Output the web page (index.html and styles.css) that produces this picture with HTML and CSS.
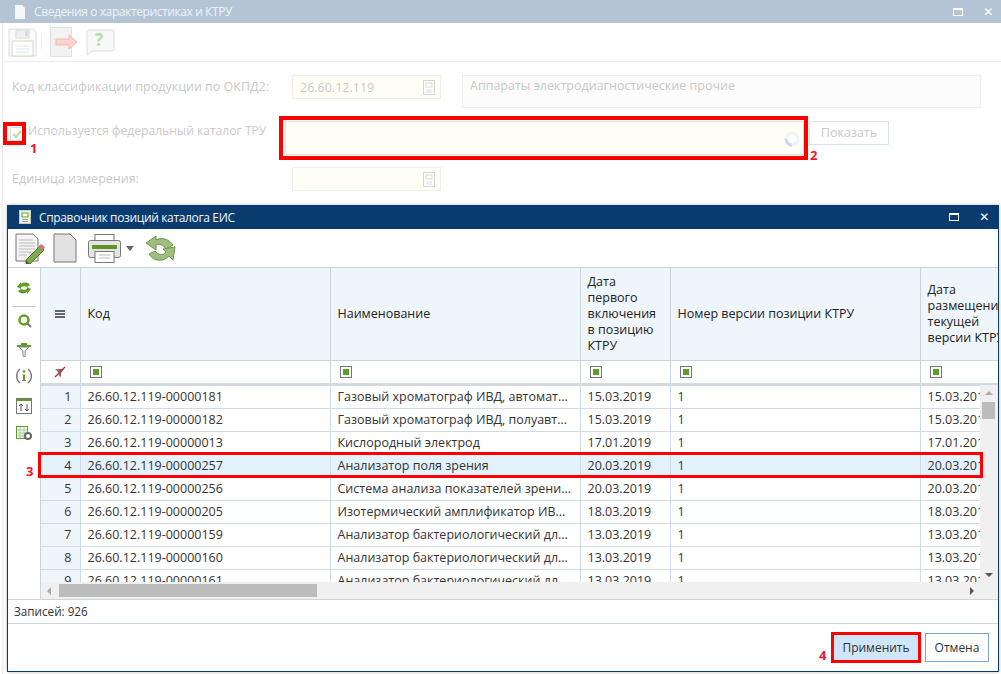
FILE: index.html
```html
<!DOCTYPE html>
<html lang="ru">
<head>
  <meta charset="UTF-8">
  <title>Справочник позиций каталога ЕИС</title>
  <link rel="stylesheet" href="styles.css">
</head>
<body>
  <div class="desk">
    <!-- окно за справочником -->
    <div class="back">
      <div class="back-title">
        <svg class="back-title-icon" width="12" height="14" viewBox="0 0 12 14"><path d="M1 0h7l3 3v11H1z" fill="#f4f6f8"/></svg>
        <span>Сведения о характеристиках и КТРУ</span>
        <span class="win-btns win-btns-back"><i class="win-max"></i><i class="win-close">✕</i></span>
      </div>
      <div class="back-tools">
        <svg width="29" height="29" viewBox="0 0 29 29"><path d="M1 1h24l3 3v24H1z" fill="#fafafa" stroke="#dcdcdc"/><rect x="8" y="2" width="13" height="8" fill="#f0f0f0" stroke="#dcdcdc"/><rect x="17" y="3" width="3" height="5" fill="#d8d8d8"/><rect x="4" y="13" width="21" height="15" fill="#fff" stroke="#c9e0b8"/><path d="M8 18h13M8 21h13M8 24h13" stroke="#e4e4e4"/></svg>
        <span class="back-sep"></span>
        <svg width="28" height="31" viewBox="0 0 28 31"><rect x=".5" y=".5" width="21" height="29" fill="#f2f2f2" stroke="#e2e2e2"/><path d="M6 12h13V8l8 7-8 7v-4H6z" fill="#fbd4d0" stroke="#f2b8b2"/></svg>
        <svg width="30" height="27" viewBox="0 0 30 27"><path d="M3 1h24a2 2 0 0 1 2 2v17a2 2 0 0 1-2 2H8l-6 4V3a2 2 0 0 1 1-2z" fill="#f8f8f8" stroke="#dedede"/><text x="10" y="17" class="q-mark">?</text></svg>
      </div>
      <div class="form">
        <div class="form-row">
          <label class="form-label">Код классификации продукции по ОКПД2:</label>
          <div class="lookup"><span>26.60.12.119</span><svg class="lookup-icon" width="13" height="15" viewBox="0 0 13 15"><rect x="1.500" y=".5" width="11" height="14" fill="#fff" stroke="#d4d4d4"/><rect x="4" y="3" width="6" height="4" fill="none" stroke="#cfe3bf"/><path d="M4 10h6M4 12h6" stroke="#dcdcdc"/></svg></div>
          <div class="name-box">Аппараты электродиагностические прочие</div>
        </div>
        <div class="form-row form-row-check">
          <span class="check"><svg width="12" height="12" viewBox="0 0 12 12"><path d="M2 6l3 3 5-6" fill="none" stroke="#b9dca6" stroke-width="2"/></svg></span>
          <label class="form-label check-label">Используется федеральный каталог ТРУ</label>
          <div class="combo"><svg class="spinner" width="16" height="16" viewBox="0 0 16 16"><circle cx="8" cy="8" r="6" fill="none" stroke="#f0f2f4" stroke-width="3"/><path d="M2 8a6 6 0 0 0 6 6" fill="none" stroke="#c5d9ee" stroke-width="3"/></svg></div>
          <div class="show-btn">Показать</div>
        </div>
        <div class="form-row">
          <label class="form-label">Единица измерения:</label>
          <div class="lookup"><span></span><svg class="lookup-icon" width="13" height="15" viewBox="0 0 13 15"><rect x="1.500" y=".5" width="11" height="14" fill="#fff" stroke="#d4d4d4"/><rect x="4" y="3" width="6" height="4" fill="none" stroke="#cfe3bf"/><path d="M4 10h6M4 12h6" stroke="#dcdcdc"/></svg></div>
        </div>
      </div>
    </div>

    <!-- справочник -->
    <div class="modal">
      <div class="modal-title">
        <svg width="12" height="14" viewBox="0 0 12 14"><rect x=".5" y=".5" width="11" height="13" fill="#f1f5e9" stroke="#c7cfb8"/><rect x="3" y="3" width="6" height="4" fill="#fff" stroke="#5f9e25"/><path d="M3 9.500h6M3 11.500h6" stroke="#999"/></svg>
        <span>Справочник позиций каталога ЕИС</span>
        <span class="win-btns"><i class="win-max"></i><i class="win-close">✕</i></span>
      </div>
      <div class="modal-tools">
        <svg width="30" height="31" viewBox="0 0 30 31"><path d="M1 1h17l5 5v22H1z" fill="#f4f4f4" stroke="#777"/><path d="M4 7h14M4 10h16M4 13h16M4 16h16M4 19h12M4 22h8" stroke="#bbb"/><path d="M11 27l14-14 4 4-14 14H11z" fill="#7fa84f" stroke="#56772f"/><path d="M24 13l2-2 4 3-2 3z" fill="#e96a7a"/><path d="M11 27v4h4z" fill="#555"/></svg>
        <svg class="tool-page" width="24" height="30" viewBox="0 0 24 30"><path d="M1 1h16l6 6v22H1z" fill="#e2e2e2" stroke="#777"/></svg>
        <svg class="tool-print" width="33" height="29" viewBox="0 0 33 29"><rect x="7" y=".5" width="19" height="8" fill="#fff" stroke="#777"/><rect x=".5" y="6.500" width="32" height="17" rx="2" fill="#e4e4e4" stroke="#777"/><rect x="4" y="11" width="25" height="4" fill="#5f9227"/><rect x="7" y="17.500" width="19" height="11" fill="#fff" stroke="#777"/><path d="M11 21h11M11 24h11" stroke="#bbb"/></svg>
        <i class="caret"></i>
        <svg class="tool-refresh" width="31" height="29" viewBox="0 0 31 29"><path d="M1 9L11 2v4C17 3 24 5 28 11l-7 4C18 11 14 9 11 11v5z" fill="#9fbf80" stroke="#6f9a45"/><path d="M30 13l-2 13-4-4C18 28 9 28 4 20l6-3c3 4 8 5 11 1l-3-3z" fill="#9fbf80" stroke="#6f9a45"/></svg>
      </div>
      <div class="modal-main">
        <div class="side">
          <svg width="16" height="14" viewBox="0 0 16 14"><path d="M1 6L5 1v2c3-2 7-2 9 1l-3 2C9 5 7 5 5 6v2z" fill="#5f9e25"/><path d="M15 8l-4 5v-2c-3 2-7 2-9-1l3-2c2 1 4 1 6 0V6z" fill="#5f9e25"/></svg>
          <span class="side-sep"></span>
          <svg class="side-zoom" width="15" height="15" viewBox="0 0 15 15"><circle cx="7" cy="7" r="4.500" fill="#fff" stroke="#5f9e25" stroke-width="2.500"/><path d="M10.500 10.500L14 14" stroke="#777" stroke-width="2"/></svg>
          <svg class="side-funnel" width="14" height="16" viewBox="0 0 14 16"><path d="M0 5h14" stroke="#5f9e25" stroke-width="2"/><path d="M2 6h10L8 10v6l-2-1v-5z" fill="#fff" stroke="#888"/><path d="M4 2h6v2H4z" fill="#5f9e25"/></svg>
          <svg class="side-info" width="16" height="16" viewBox="0 0 16 16"><path d="M4 1a9 9 0 0 0 0 14M12 1a9 9 0 0 1 0 14" fill="none" stroke="#777" stroke-width="1.500"/><circle cx="8" cy="3.500" r="1.300" fill="#5f9e25"/><path d="M6.500 6.500H9V12h1v1H6v-1h1V7.500h-.5z" fill="#5f9e25"/></svg>
          <svg class="side-sort" width="16" height="16" viewBox="0 0 16 16"><rect x=".5" y=".5" width="15" height="15" fill="#fff" stroke="#777"/><rect x="1" y="1" width="14" height="2" fill="#5f9e25"/><path d="M5 13V6M3 8l2-2 2 2M11 6v7M9 11l2 2 2-2" fill="none" stroke="#555"/></svg>
          <svg class="side-cols" width="16" height="14" viewBox="0 0 16 14"><rect x=".5" y=".5" width="11" height="12" fill="#fff" stroke="#5f9e25"/><path d="M4 1v11M8 1v11M1 4h10M1 7h10M1 10h10" stroke="#9c9"/><circle cx="12" cy="10" r="3" fill="#fff" stroke="#666" stroke-width="2"/></svg>
        </div>
        <div class="grid">
          <table class="tbl">
            <colgroup><col class="c-num"><col class="c-wide"><col class="c-wide"><col class="c-date"><col class="c-wide"><col class="c-date"></colgroup>
            <thead>
              <tr class="head-row">
                <th class="num-cell"><i class="menu-ic"></i></th>
                <th>Код</th>
                <th>Наименование</th>
                <th>Дата первого включения в позицию КТРУ</th>
                <th>Номер версии позиции КТРУ</th>
                <th class="th-clip">Дата размещения текущей версии КТРУ</th>
              </tr>
              <tr class="filter-row">
                <td class="filter-num"><svg width="12" height="12" viewBox="0 0 12 12"><path d="M1 3h9L7 7v4L5 10V7z" fill="#777"/><path d="M1 11L11 1" stroke="#e01b1b" stroke-width="1.300"/></svg></td>
                <td><i class="fbox"></i></td>
                <td><i class="fbox"></i></td>
                <td><i class="fbox"></i></td>
                <td><i class="fbox"></i></td>
                <td><i class="fbox"></i></td>
              </tr>
            </thead>
            <tbody>
              <tr><td class="num-cell">1</td><td>26.60.12.119-00000181</td><td>Газовый хроматограф ИВД, автомат...</td><td>15.03.2019</td><td>1</td><td>15.03.2019</td></tr>
              <tr><td class="num-cell">2</td><td>26.60.12.119-00000182</td><td>Газовый хроматограф ИВД, полуавт...</td><td>15.03.2019</td><td>1</td><td>15.03.2019</td></tr>
              <tr><td class="num-cell">3</td><td>26.60.12.119-00000013</td><td>Кислородный электрод</td><td>17.01.2019</td><td>1</td><td>17.01.2019</td></tr>
              <tr class="selected"><td class="num-cell">4</td><td>26.60.12.119-00000257</td><td>Анализатор поля зрения</td><td>20.03.2019</td><td>1</td><td>20.03.2019</td></tr>
              <tr><td class="num-cell">5</td><td>26.60.12.119-00000256</td><td>Система анализа показателей зрени...</td><td>20.03.2019</td><td>1</td><td>20.03.2019</td></tr>
              <tr><td class="num-cell">6</td><td>26.60.12.119-00000205</td><td>Изотермический амплификатор ИВ...</td><td>18.03.2019</td><td>1</td><td>18.03.2019</td></tr>
              <tr><td class="num-cell">7</td><td>26.60.12.119-00000159</td><td>Анализатор бактериологический дл...</td><td>13.03.2019</td><td>1</td><td>13.03.2019</td></tr>
              <tr><td class="num-cell">8</td><td>26.60.12.119-00000160</td><td>Анализатор бактериологический дл...</td><td>13.03.2019</td><td>1</td><td>13.03.2019</td></tr>
              <tr><td class="num-cell">9</td><td>26.60.12.119-00000161</td><td>Анализатор бактериологический дл...</td><td>13.03.2019</td><td>1</td><td>13.03.2019</td></tr>
            </tbody>
          </table>
          <div class="vscroll"><i class="arr arr-up"></i><i class="vthumb"></i><i class="arr arr-down"></i></div>
          <div class="hscroll"><i class="arr arr-left"></i><i class="hthumb"></i><i class="arr arr-right"></i></div>
        </div>
      </div>
      <div class="status">Записей: 926</div>
      <div class="actions">
        <div class="btn btn-primary">Применить</div>
        <div class="btn">Отмена</div>
      </div>
    </div>

    <!-- пометки поверх скриншота -->
    <div class="mark mark-1"></div>
    <div class="mark mark-2"></div>
    <div class="mark mark-3"></div>
    <div class="mark mark-4"></div>
    <span class="mark-num num-1">1</span>
    <span class="mark-num num-2">2</span>
    <span class="mark-num num-3">3</span>
    <span class="mark-num num-4">4</span>
  </div>
</body>
</html>
```

FILE: styles.css
```css
* {
  box-sizing: border-box;
}
html, body {
  margin: 0;
  padding: 0;
  background: #fff;
  overflow: hidden;
}
body {
  font-family: "Open Sans", "Noto Sans", sans-serif;
  font-size: 12.5px;
  color: #333;
}
i {
  display: block;
  font-style: normal;
}
.desk {
  position: relative;
  width: 1001px;
  height: 674px;
  overflow: hidden;
}

/* окно сзади */
.back {
  height: 674px;
  margin-left: 2px;
  border-left: 1px solid #e8e8e8;
}
.back-title {
  display: flex;
  align-items: center;
  height: 23px;
  margin-left: -3px;
  padding-left: 14px;
  background: #b5c4d5;
  color: #eef3f8;
  font-size: 12px;
  letter-spacing: -.4px;
  font-weight: 400;
}
.back-title-icon {
  margin-right: 8px;
}
.win-btns {
  display: flex;
  align-items: center;
  gap: 20px;
  margin-left: auto;
  padding-right: 9px;
}
.win-btns-back {
  padding-right: 8px;
}
.win-max {
  width: 10px;
  height: 8px;
  border: 1px solid #fff;
  border-top-width: 2px;
}
.win-close {
  color: #fff;
  font-size: 12px;
  font-weight: 700;
  line-height: 12px;
  font-family: "DejaVu Sans", sans-serif;
}
.back-tools {
  display: flex;
  align-items: center;
  height: 39px;
  padding-left: 5px;
  border-bottom: 1px solid #ececec;
}
.back-tools svg:last-child {
  margin-left: 7px;
}
.back-sep {
  width: 1px;
  height: 14px;
  margin: 0 8px 0 4px;
  background: #eee;
}
.q-mark {
  font-size: 17px;
  font-weight: 700;
  fill: #b9dca6;
}
.form {
  color: #c9c9c9;
}
.form-row {
  display: flex;
  align-items: flex-start;
  height: 46px;
  padding-top: 13px;
}
.form-row-check {
  padding-left: 7px;
}
.form-label {
  width: 289px;
  padding-left: 9px;
  line-height: 24px;
}
.lookup {
  position: relative;
  display: flex;
  align-items: center;
  width: 149px;
  height: 24px;
  padding-left: 7px;
  background: #fffef6;
  border: 1px solid #eeeeea;
}
.lookup-icon {
  position: absolute;
  right: 5px;
  top: 4px;
}
.name-box {
  width: 519px;
  height: 33px;
  margin-left: 21px;
  padding: 1px 7px;
  background: #fcfcfc;
  border: 1px solid #eee;
}
.check {
  display: flex;
  align-items: center;
  justify-content: center;
  flex: none;
  width: 14px;
  height: 14px;
  margin-top: 6px;
  border: 1px solid #dcdcdc;
}
.check-label {
  width: 261px;
  padding-left: 4px;
  margin-top: -2px;
  font-size: 12.1px;
  white-space: nowrap;
}
.combo {
  position: relative;
  width: 519px;
  height: 34px;
  background: #fffef6;
  border: 1px solid #f2d9d2;
}
.spinner {
  position: absolute;
  right: 3px;
  top: 9px;
}
.show-btn {
  width: 80px;
  height: 24px;
  margin-left: 5px;
  border: 1px solid #d6e2ef;
  color: #c8c8c8;
  text-align: center;
  line-height: 22px;
}

/* справочник */
.modal {
  position: absolute;
  left: 7px;
  top: 205px;
  display: flex;
  flex-direction: column;
  width: 992px;
  height: 467px;
  background: #fff;
  border: 1px solid #0a3b6f;
  border-top: 0;
  box-shadow: 0 0 4px rgba(0, 0, 0, .25);
}
.modal-title {
  display: flex;
  align-items: center;
  gap: 8px;
  flex: none;
  height: 24px;
  padding-left: 11px;
  background: #0a3b6f;
  color: #f2f6fa;
  font-size: 12px;
  letter-spacing: -.35px;
  font-weight: 400;
}
.modal-tools {
  display: flex;
  align-items: center;
  flex: none;
  height: 38px;
  padding-left: 7px;
}
.tool-page {
  margin-left: 8px;
}
.tool-print {
  margin-left: 11px;
}
.caret {
  width: 0;
  height: 0;
  margin-left: 5px;
  border: 4px solid transparent;
  border-top: 5px solid #666;
  border-bottom: 0;
}
.tool-refresh {
  margin-left: 11px;
}
.modal-main {
  display: flex;
  flex: none;
  height: 333px;
  border-top: 1px solid #ccd3da;
  border-bottom: 1px solid #ccd3da;
}
.side {
  display: flex;
  flex-direction: column;
  align-items: center;
  flex: none;
  width: 33px;
  padding-top: 13px;
  border-right: 1px solid #ccd3da;
}
.side-sep {
  width: 24px;
  height: 1px;
  margin: 11px 0 6px;
  background: #ccc;
}
.side-funnel {
  margin-top: 13px;
}
.side-info {
  margin-top: 11px;
}
.side-sort {
  margin-top: 14px;
}
.side-cols {
  margin-top: 12px;
}
.grid {
  position: relative;
  flex: 1;
  overflow: hidden;
}
.tbl {
  width: 969px;
  table-layout: fixed;
  border-collapse: collapse;
}
.c-num {
  width: 39px;
}
.c-wide {
  width: 250px;
}
.c-date {
  width: 90px;
}
.tbl th,
.tbl td {
  padding: 0 7px;
  border-right: 1px solid #cfdbe7;
  border-bottom: 1px solid #cfdbe7;
  white-space: nowrap;
  overflow: hidden;
}
.tbl th {
  height: 92px;
  background: #eff6fb;
  border-color: #ccd3da;
  color: #222;
  font-weight: 400;
  line-height: 16px;
  text-align: left;
  white-space: normal;
}
.tbl .th-clip {
  padding-right: 0;
}
.menu-ic {
  width: 10px;
  height: 8px;
  margin: 0 auto;
  border-top: 2px solid #666;
  border-bottom: 2px solid #666;
  position: relative;
}
.menu-ic::after {
  content: "";
  display: block;
  height: 2px;
  margin-top: 1px;
  background: #666;
}
.filter-row td {
  height: 24px;
  border-bottom: 3px solid #d3dae1;
  border-right-color: #ccd3da;
}
.filter-num {
  text-align: center;
}
.filter-num svg {
  display: block;
  margin: 0 auto;
}
.fbox {
  position: relative;
  width: 12px;
  height: 12px;
  margin-left: 2px;
  border: 1px solid #777;
}
.fbox::after {
  content: "";
  position: absolute;
  left: 2px;
  top: 2px;
  width: 6px;
  height: 6px;
  background: #5f9e25;
}
.tbl tbody td {
  height: 23px;
  line-height: 22px;
}
.tbl .num-cell {
  background: #eff6fb;
  text-align: right;
  padding-right: 8px;
}
.tbl th.num-cell {
  padding: 0;
}
.tbl .selected td {
  background: #e3f2fc;
}
.vscroll {
  position: absolute;
  right: 0;
  top: 117px;
  bottom: 0;
  width: 18px;
  background: #f0f0f0;
}
.vthumb {
  position: absolute;
  left: 2px;
  top: 17px;
  width: 13px;
  height: 17px;
  background: #bcbcbc;
}
.hscroll {
  position: absolute;
  left: 0;
  right: 18px;
  bottom: 0;
  height: 17px;
  background: #f0f0f0;
}
.hthumb {
  position: absolute;
  left: 18px;
  top: 2px;
  width: 258px;
  height: 13px;
  background: #bcbcbc;
}
.arr {
  position: absolute;
  width: 0;
  height: 0;
  border: 4px solid transparent;
}
.arr-up {
  left: 5px;
  top: 6px;
  border-top: 0;
  border-bottom-color: #aaa;
}
.arr-down {
  left: 5px;
  bottom: 22px;
  border-bottom: 0;
  border-top-color: #555;
}
.arr-left {
  left: 6px;
  top: 5px;
  border-left: 0;
  border-right-color: #aaa;
}
.arr-right {
  right: 6px;
  top: 5px;
  border-right: 0;
  border-left-color: #555;
}
.status {
  flex: none;
  height: 24px;
  padding-left: 6px;
  border-bottom: 1px solid #ccd3da;
  line-height: 23px;
  font-size: 11.7px;
}
.actions {
  display: flex;
  justify-content: flex-end;
  align-items: center;
  gap: 6px;
  flex: 1;
  padding-right: 9px;
  font-size: 12px;
}
.btn {
  width: 64px;
  height: 29px;
  border: 1px solid #7ea6cc;
  line-height: 27px;
  text-align: center;
}
.btn-primary {
  width: 86px;
  background: #cfe6f8;
}

/* красные пометки */
.mark {
  position: absolute;
  border: 3px solid #ff0000;
}
.mark-1 {
  left: 3px;
  top: 122px;
  width: 23px;
  height: 23px;
  border-width: 4px;
}
.mark-2 {
  left: 279px;
  top: 116px;
  width: 529px;
  height: 44px;
  border-width: 4px;
}
.mark-3 {
  left: 38px;
  top: 452px;
  width: 945px;
  height: 26px;
}
.mark-4 {
  left: 831px;
  top: 632px;
  width: 90px;
  height: 31px;
}
.mark-num {
  position: absolute;
  color: #f0142d;
  font-weight: 700;
  font-size: 13px;
  line-height: 14px;
}
.num-1 {
  left: 30px;
  top: 141px;
}
.num-2 {
  left: 810px;
  top: 148px;
}
.num-3 {
  left: 26px;
  top: 464px;
}
.num-4 {
  left: 819px;
  top: 648px;
}
```
